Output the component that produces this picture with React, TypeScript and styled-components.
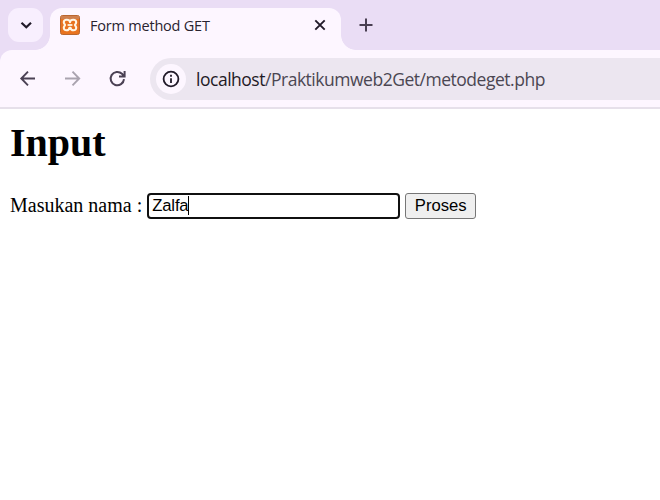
import React from "react";
import styled, { createGlobalStyle } from "styled-components";

const GlobalStyle = createGlobalStyle`
  * { box-sizing: border-box; }
  body { margin: 0; background: #fff; overflow: hidden; }
`;

const Window = styled.div`
  width: 660px;
  height: 500px;
  overflow: hidden;
  background: #fff;
`;

const TabStrip = styled.div`
  display: flex;
  align-items: flex-start;
  height: 50px;
  padding: 8px 0 0 8px;
  background: #eaddf5;
`;

const TabSearch = styled.button`
  display: grid;
  place-items: center;
  width: 35px;
  height: 34px;
  margin: 0 7px 0 0;
  padding: 0;
  border: 0;
  border-radius: 11px;
  background: #f8effe;
`;

const Tab = styled.div`
  position: relative;
  display: flex;
  align-items: center;
  width: 291px;
  height: 42px;
  padding: 0 14px 8px 10px;
  border-radius: 12px 12px 0 0;
  background: #fdf6ff;

  &::before,
  &::after {
    content: "";
    position: absolute;
    bottom: 0;
    width: 15px;
    height: 15px;
  }
  &::before {
    right: 100%;
    background: radial-gradient(circle at 0 0, transparent 14.5px, #fdf6ff 15.2px);
  }
  &::after {
    left: 100%;
    background: radial-gradient(circle at 100% 0, transparent 14.5px, #fdf6ff 15.2px);
  }
`;

const TabTitle = styled.span`
  flex: 1;
  margin-left: 10px;
  padding-top: 2px;
  font: 400 14.5px/20px "Open Sans", sans-serif;
  letter-spacing: -0.21px;
  white-space: nowrap;
  color: #29232f;
`;

const PlainButton = styled.button`
  display: grid;
  place-items: center;
  width: 14px;
  height: 14px;
  padding: 0;
  border: 0;
  background: none;
`;

const NewTab = styled(PlainButton)`
  margin: 10px 0 0 18px;
`;

const ToolbarBack = styled.div`
  background: #eaddf5;
`;

const Toolbar = styled.div`
  display: flex;
  align-items: center;
  height: 59px;
  padding-left: 17px;
  border-bottom: 2px solid #e6e0ea;
  border-radius: 12px 0 0 0;
  background: #fdf6ff;
`;

const NavButton = styled.button<{ $gap: number }>`
  display: grid;
  place-items: center;
  width: 22px;
  height: 22px;
  margin: 0 ${(p) => p.$gap}px 0 0;
  padding: 0;
  border: 0;
  background: none;
`;

const AddressBar = styled.div`
  display: flex;
  flex: 1;
  align-items: center;
  height: 42px;
  padding-left: 6px;
  border-radius: 21px 0 0 21px;
  background: #ece6f0;
`;

const SiteInfo = styled.span`
  display: grid;
  place-items: center;
  width: 30px;
  height: 30px;
  border-radius: 50%;
  background: #fdf6ff;
`;

const Url = styled.span`
  margin-left: 10px;
  padding-top: 1px;
  font: 400 17.5px/26px "Open Sans", sans-serif;
  letter-spacing: -0.48px;
  white-space: nowrap;
  color: #4b4652;
`;

const Host = styled.span`
  color: #1f1a25;
`;

const Page = styled.main`
  padding: 11px 10px;
  font: 20px/23px "Liberation Serif", serif;
  color: #000;
`;

const Heading = styled.h1`
  margin: 0 0 27px;
  font-size: 40px;
  line-height: 46px;
`;

const Form = styled.form`
  display: flex;
  align-items: center;
  height: 26px;
`;

const Label = styled.label`
  padding-bottom: 2px;
`;

const Field = styled.div`
  display: flex;
  align-items: center;
  width: 253px;
  height: 26px;
  margin: 0 5px;
  padding: 0 0 2px 3px;
  border: 2px solid #101010;
  border-radius: 4px;
  font: 16.67px/19px "Liberation Sans", sans-serif;
  letter-spacing: -0.15px;
`;

const Caret = styled.span`
  width: 1px;
  height: 19px;
  background: #000;
`;

const Submit = styled.button`
  width: 71px;
  height: 26px;
  padding: 0 0 2px;
  border: 1px solid #767676;
  border-radius: 3px;
  background: #efefef;
  font: 16.67px/19px "Liberation Sans", sans-serif;
  color: #000;
`;

export default function App() {
  return (
    <Window>
      <GlobalStyle />
      <TabStrip>
        <TabSearch aria-label="Search tabs">
          <svg width="14" height="14" viewBox="0 0 14 14" fill="none" stroke="#211a29" strokeWidth="2.2">
            <path d="M2.5 4.8l4.8 4.5L12 4.8" />
          </svg>
        </TabSearch>
        <Tab>
          <svg width="20" height="20" viewBox="0 0 20 20" fill="none">
            <rect x=".5" y=".5" width="19" height="19" rx="2" fill="#e9731f" stroke="#b9662f" />
            <path d="M1 1h18v3H1z" fill="#cf804e" />
            <path
              d="M10 7.2C9.6 4 3.8 4 3.8 7.3C3.8 8.8 5 9.2 5 10C5 10.8 3.8 11.2 3.8 12.8C3.8 16.2 9 16 9.4 12.8H10.6C11 16 16.2 16.2 16.2 12.8C16.2 11.2 15 10.8 15 10C15 9.2 16.2 8.8 16.2 7.3C16.2 4 10.4 4 10 7.2Z"
              stroke="#fff6e5"
              strokeWidth="2.1"
              strokeLinejoin="round"
            />
            <path d="M7.6 10h4.8" stroke="#fff6e5" strokeWidth="1.8" />
          </svg>
          <TabTitle>Form method GET</TabTitle>
          <PlainButton aria-label="Close tab">
            <svg width="14" height="14" viewBox="0 0 14 14" stroke="#211a29" strokeWidth="1.9">
              <path d="M2.3 2.3l9.4 9.4M11.7 2.3L2.3 11.7" />
            </svg>
          </PlainButton>
        </Tab>
        <NewTab aria-label="New tab">
          <svg width="14" height="14" viewBox="0 0 14 14" stroke="#493f52" strokeWidth="2">
            <path d="M7 .5v13M.5 7h13" />
          </svg>
        </NewTab>
      </TabStrip>
      <ToolbarBack>
        <Toolbar>
          <NavButton $gap={23} aria-label="Back">
            <svg width="22" height="22" viewBox="0 0 22 22" fill="none" stroke="#4b4154" strokeWidth="1.9">
              <path d="M18 10.5H4.5M11 3.7L4.3 10.5l6.7 6.8" />
            </svg>
          </NavButton>
          <NavButton $gap={22} aria-label="Forward">
            <svg width="22" height="22" viewBox="0 0 22 22" fill="none" stroke="#aaa3af" strokeWidth="1.9">
              <path d="M3 10.5h13.5M10.5 3.7l6.7 6.8-6.7 6.8" />
            </svg>
          </NavButton>
          <NavButton $gap={22} aria-label="Reload">
            <svg width="22" height="22" viewBox="0 0 22 22" fill="none" stroke="#4b4154" strokeWidth="2">
              <path d="M18 11.2A6.7 6.7 0 1 1 16 5.8L17.8 7.8M13 8.4h5.6V3" />
            </svg>
          </NavButton>
          <AddressBar>
            <SiteInfo>
              <svg width="18" height="18" viewBox="0 0 18 18" fill="none" stroke="#211a29" strokeWidth="1.8">
                <circle cx="9" cy="9" r="7.4" />
                <path d="M9 8.2v4.9M9 4.8v1.9" />
              </svg>
            </SiteInfo>
            <Url>
              <Host>localhost</Host>/Praktikumweb2Get/metodeget.php
            </Url>
          </AddressBar>
        </Toolbar>
      </ToolbarBack>
      <Page>
        <Heading>Input</Heading>
        <Form onSubmit={(e) => e.preventDefault()}>
          <Label>Masukan nama :</Label>
          <Field role="textbox">
            Zalfa
            <Caret />
          </Field>
          <Submit>Proses</Submit>
        </Form>
      </Page>
    </Window>
  );
}
